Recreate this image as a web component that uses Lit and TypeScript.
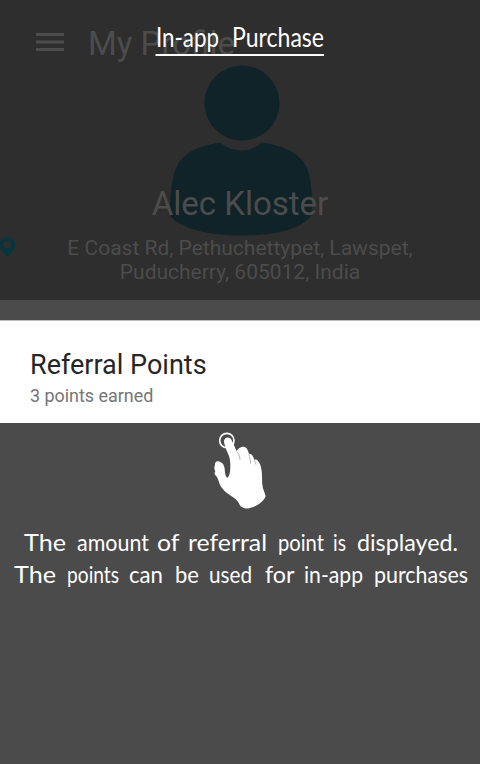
import { LitElement, html, svg, css } from "lit";
import { customElement } from "lit/decorators.js";

type Word = [text: string, x: number, width: number];

const TITLE: Word[] = [["In-app", 156, 63], ["Purchase", 232, 92]];
const LINE_ONE: Word[] = [
  ["The", 24, 42], ["amount", 77, 72], ["of", 157, 22], ["referral", 188, 79],
  ["point", 278, 46], ["is", 333, 13], ["displayed.", 357, 101],
];
const LINE_TWO: Word[] = [
  ["The", 14, 42], ["points", 67, 52], ["can", 129, 34], ["be", 175, 24],
  ["used", 209, 43], ["for", 265, 29], ["in-app", 304, 59], ["purchases", 374, 94],
];

const words = (list: Word[], y: number) => svg`<text y=${y}>${list.map(
  ([text, x, width]) => svg`<tspan x=${x} textLength=${width} lengthAdjust="spacingAndGlyphs">${text}</tspan> `
)}</text>`;

@customElement("app-root")
export class AppRoot extends LitElement {
  static styles = css`
    :host {
      display: block;
      position: relative;
      height: 764px;
      overflow: hidden;
      background: #4b4b4b;
      font-family: Roboto, sans-serif;
    }
    svg { display: block; }
    .header {
      position: relative;
      height: 300px;
      background: #2e2e2e;
      color: #4c4c4c;
      margin-bottom: 20px;
      display: flex;
      flex-direction: column;
    }
    .bar {
      display: flex;
      align-items: center;
      gap: 24px;
      height: 87px;
      padding-left: 36px;
      font-size: 33px;
      white-space: nowrap;
    }
    .menu { width: 28px; height: 18px; margin-top: -3px; }
    .avatar { position: absolute; left: 166px; top: 62px; }
    .name {
      position: relative;
      margin-top: 97px;
      line-height: 40px;
      font-size: 33px;
      text-align: center;
    }
    .place {
      position: relative;
      display: flex;
      margin-top: 12px;
      font-size: 21px;
      line-height: 24px;
      text-align: center;
    }
    .pin { width: 16px; height: 20px; margin-top: 1px; }
    .address { flex: 1; margin-right: 16px; }
    .card {
      box-sizing: border-box;
      height: 103px;
      padding: 28px 30px 0;
      background: #fff;
      border-top: 1px solid #bdbdbd;
    }
    .heading { font-size: 27px; line-height: 32px; color: #262626; }
    .sub { font-size: 17.900px; line-height: 22px; margin-top: 4px; color: #757575; }
    .hand { margin: -8px 0 0 190px; clip-path: inset(8px 0 0 0); }
    .script {
      font-family: Lato, sans-serif;
      font-size: 24px;
      fill: #fff;
    }
    .title { position: absolute; left: 0; top: 0; }
    .title text { font-size: 26px; }
  `;

  render() {
    return html`
      <div class="header">
        <div class="bar">
          <svg class="menu" viewBox="0 0 28 18" fill="#4c4c4c">
            <path d="M0 0h28v3H0zM0 7.5h28v3H0zM0 15h28v3H0z" />
          </svg>
          <span>My Profile</span>
        </div>
        <svg class="avatar" width="152" height="176" viewBox="166 62 152 176" fill="#102328">
          <circle cx="242" cy="103" r="37.5" />
          <path d="M220 142.5C192 147 179 156 174 174C170 189 170 205 170.500 216C180 228 207 235.500 242 235.500C276 235.500 301 229 311 216C313 199 312 182 307 168C301 155 287 146 262 142.500C250 153 233 153 220 142.500Z" />
        </svg>
        <div class="name">Alec Kloster</div>
        <div class="place">
          <svg class="pin" viewBox="0 0 16 20" fill="#04363f">
            <path fill-rule="evenodd" d="M7.500 0.500C3 .5 -.2 4 -.2 8C-.2 12.500 5 17 7.500 20C10 17 15.200 12.500 15.200 8C15.200 4 12 .5 7.500 .5ZM7.500 4A3.800 3.800 0 1 1 7.500 11.600A3.800 3.800 0 1 1 7.500 4Z" />
          </svg>
          <div class="address">E Coast Rd, Pethuchettypet, Lawspet,<br />Puducherry, 605012, India</div>
        </div>
      </div>
      <div class="card">
        <div class="heading">Referral Points</div>
        <div class="sub">3 points earned</div>
      </div>
      <svg class="hand" width="100" height="100" viewBox="0 0 300 300">
        <circle cx="110.500" cy="76.500" r="21.500" fill="none" stroke="#fff" stroke-width="5" />
        <path fill="#fff" d="M102 79C102 65 121 63 125 76L140 108C146 96 161 91 169 99C173 104 175 110 177 116C185 115 190 123 193 134C201 132 207 139 210 148C217 164 216 187 217 209C218 222 225 233 227 244C221 260 198 276 177 280C165 282 154 278 149 269C143 255 132 248 119 240C103 229 91 216 88 204C83 190 82 186 76 181C73 177 73 173 76 169C72 162 72 156 75 151C74 143 78 138 84 139C97 141 103 150 104 162C105 175 107 187 112 188C119 185 121 169 121 151C121 131 117 121 110 107C107 96 103 91 102 79Z" />
        <path fill="none" stroke="#aaa" stroke-width="2.500" d="M140 109C145 115 150 123 150 135M177 117C178 127 182 134 182 146M193 135L198 149" />
      </svg>
      <svg class="script" width="480" height="90" viewBox="0 515 480 90">
        ${words(LINE_ONE, 551)}${words(LINE_TWO, 583)}
      </svg>
      <svg class="script title" width="480" height="62">
        ${words(TITLE, 47)}
        <path d="M155.500 54h168.500v2h-168.500z" />
      </svg>
    `;
  }
}
